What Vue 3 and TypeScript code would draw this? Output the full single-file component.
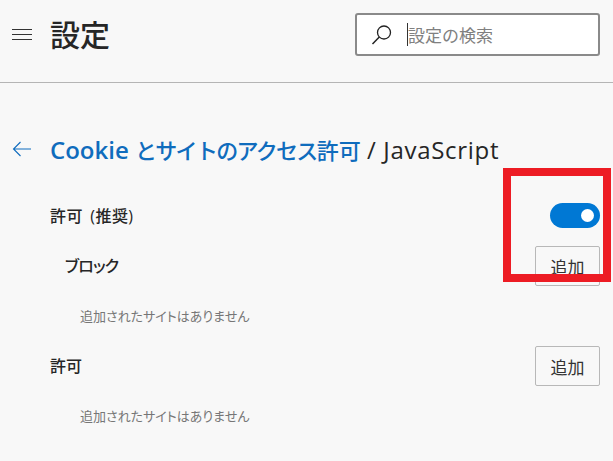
<script setup lang="ts">
const emptyText = '追加されたサイトはありません'
</script>

<template>
  <div class="page">
    <header class="header">
      <svg class="menu" width="20" height="12" viewBox="0 0 20 12">
        <path d="M0 1.5h20M0 6.5h20M0 11.5h20" stroke="#333" stroke-width="1" fill="none" />
      </svg>
      <h1 class="app-title">設定</h1>
      <div class="search">
        <svg class="search-icon" width="22" height="22" viewBox="0 0 22 22">
          <circle cx="13" cy="8.5" r="6.5" stroke="#222" stroke-width="1.3" fill="none" />
          <path d="M8.3 13L1.5 20" stroke="#222" stroke-width="1.5" fill="none" />
        </svg>
        <span class="caret"></span>
        <span class="placeholder">設定の検索</span>
      </div>
    </header>

    <main class="content">
      <div class="crumbs">
        <svg class="back" width="20" height="16" viewBox="0 0 20 16">
          <path d="M19 8H1.5M8.5 1L1.5 8l7 7" stroke="#0f6cbd" stroke-width="1.1" fill="none" />
        </svg>
        <h2 class="crumb-text"><span class="link"><span class="latin strong">Cookie</span> <span class="kana">とサイトのアクセス</span><span class="kanji">許可</span></span> <span class="latin">/ JavaScript</span></h2>
      </div>

      <div class="row toggle-row">
        <span class="label recommended">許可 (推奨)</span>
        <span class="toggle"><span class="knob"></span></span>
      </div>
      <div class="row block-row">
        <span class="label katakana">ブロック</span>
        <button class="add">追加</button>
      </div>
      <p class="empty">{{ emptyText }}</p>
      <div class="row allow-row">
        <span class="label">許可</span>
        <button class="add">追加</button>
      </div>
      <p class="empty">{{ emptyText }}</p>
    </main>

    <div class="highlight"></div>
  </div>
</template>

<style>
html, body { margin: 0; background: #f8f8f8; }
</style>

<style scoped>
.page {
  position: relative;
  width: 613px;
  height: 461px;
  overflow: hidden;
  background: #f8f8f8;
  color: #262626;
  font-family: "Open Sans", "Noto Sans CJK JP", sans-serif;
}
.header {
  box-sizing: border-box;
  height: 83px;
  border-bottom: 1px solid #b5b5b5;
  display: flex;
  align-items: flex-start;
  padding: 13px 13px 0 12px;
}
.menu { margin-top: 15px; flex: none; }
.app-title {
  margin: -1px 0 0 18px;
  font-family: "Noto Sans CJK JP", sans-serif;
  font-size: 30px;
  line-height: 42px;
  font-weight: 500;
  color: #262626;
}
.search {
  box-sizing: border-box;
  margin-left: auto;
  width: 245px;
  height: 43px;
  background: #fff;
  border: 2px solid #8a8a8a;
  border-radius: 3px;
  display: flex;
  align-items: center;
  padding-left: 14px;
}
.search-icon { flex: none; }
.caret {
  width: 1px;
  height: 23px;
  background: #333;
  margin-left: 14px;
  flex: none;
}
.placeholder {
  font-family: "Noto Sans CJK JP", sans-serif;
  font-size: 17px;
  color: #808080;
}
.content { padding: 0 13px 0 12px; }
.crumbs {
  display: flex;
  align-items: center;
  margin-top: 48px;
  height: 36px;
}
.back { flex: none; }
.crumb-text {
  margin: 0 0 0 18px;
  font-family: "Open Sans", "Noto Sans CJK JP", sans-serif;
  font-size: 24px;
  line-height: 36px;
  font-weight: 500;
  color: #262626;
  white-space: nowrap;
}
.latin { letter-spacing: 0.7px; }
.strong { font-weight: 600; letter-spacing: 0; }
.kana {
  font-family: "Noto Sans CJK JP", sans-serif;
  font-size: 22px;
  letter-spacing: -1.7px;
}
.kanji {
  font-family: "Noto Sans CJK JP", sans-serif;
  font-size: 22px;
}
.link { color: #0f6cbd; }
.row {
  display: flex;
  align-items: center;
  justify-content: space-between;
  font-family: "Open Sans", "Noto Sans CJK JP", sans-serif;
}
.label {
  font-size: 16px;
  line-height: 24px;
  margin-top: 0;
  font-weight: 500;
  color: #262626;
  font-feature-settings: "palt";
}
.recommended { word-spacing: 3px; letter-spacing: 0.4px; margin-top: 2px; }
.katakana { letter-spacing: -0.8px; padding-left: 1px; }
.toggle-row { margin-top: 28px; height: 40px; padding-left: 38px; }
.block-row { height: 40px; padding-left: 52px; margin-top: 11px; }
.allow-row { height: 40px; padding-left: 38px; margin-top: 0; }
.toggle {
  box-sizing: border-box;
  width: 50px;
  height: 25px;
  border-radius: 13px;
  background: #0078d4;
  display: flex;
  align-items: center;
  justify-content: flex-end;
  padding-right: 6px;
}
.knob {
  width: 13px;
  height: 13px;
  border-radius: 50%;
  background: #fff;
}
.add {
  box-sizing: border-box;
  width: 65px;
  height: 40px;
  background: #f8f8f8;
  border: 1px solid #b8b8b8;
  border-radius: 2px;
  padding: 0;
  font-family: "Noto Sans CJK JP", sans-serif;
  font-size: 17px;
  color: #333;
}
.empty {
  margin: 0;
  height: 60px;
  padding-left: 68px;
  font-family: "Noto Sans CJK JP", sans-serif;
  font-size: 13px;
  line-height: 60px;
  color: #767676;
  font-feature-settings: "palt";
}
.highlight {
  position: absolute;
  left: 503px;
  top: 168px;
  width: 108px;
  height: 114px;
  box-sizing: border-box;
  border: 8px solid #ed1c24;
  pointer-events: none;
}
</style>
